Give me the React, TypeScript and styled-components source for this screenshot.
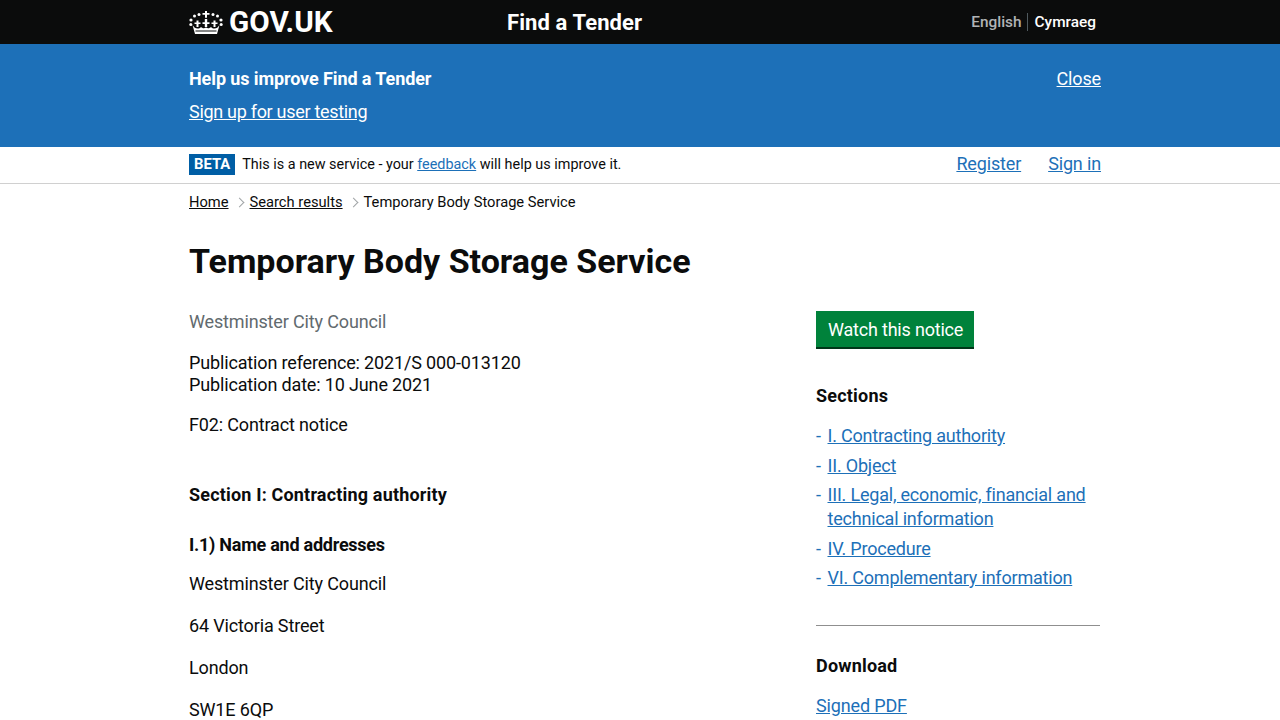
import React from "react";
import styled, { createGlobalStyle } from "styled-components";

const Global = createGlobalStyle`
  html, body { margin: 0; padding: 0; background: #fff; overflow: hidden; height: 720px; }
  body { font-family: Roboto, "Liberation Sans", sans-serif; color: #0b0c0c; }
`;
const Wrap = styled.div`
  width: 912px;
  margin-left: 189px;
`;
const Header = styled.header`
  background: #0b0c0c;
  height: 44px;
  color: #fff;
`;
const HeaderRow = styled(Wrap)`
  display: grid;
  grid-template-columns: 318px 1fr auto;
  align-items: center;
  height: 44px;
`;
const Logo = styled.div`
  display: flex;
  align-items: center;
  gap: 6px;
  font-size: 29.700px;
  font-weight: 700;
`;
const LogoText = styled.span`
  padding-bottom: 2px;
`;
const Service = styled.div`
  font-size: 22px;
  font-weight: 700;
  letter-spacing: 0.1px;
`;
const Lang = styled.div`
  display: flex;
  align-items: center;
  font-size: 15.400px;
  font-weight: 500;
  margin-right: 5px;
`;
const LangItem = styled.span<{ $active?: boolean }>`
  color: ${(p) => (p.$active ? "#fff" : "#b1b4b6")};
  ${(p) => (p.$active ? "" : "border-right: 1px solid #505a5f; padding-right: 5px; margin-right: 7px;")}
`;
const Banner = styled.section`
  background: #1d70b8;
  height: 103px;
  color: #fff;
`;
const BannerRow = styled(Wrap)`
  display: flex;
  justify-content: space-between;
  padding-top: 23px;
`;
const BannerTitle = styled.div`
  font-size: 18px;
  font-weight: 700;
  line-height: 24px;
  letter-spacing: -0.1px;
`;
const BannerLink = styled.a`
  display: block;
  color: #fff;
  text-decoration: underline;
  font-size: 18px;
  line-height: 24px;
  margin-top: 9px;
  letter-spacing: -0.3px;
`;
const CloseLink = styled.a`
  color: #fff;
  text-decoration: underline;
  font-size: 18px;
  line-height: 24px;
  letter-spacing: -0.15px;
`;
const BetaBar = styled.div`
  height: 36px;
  border-bottom: 1px solid #d0d0d0;
`;
const BetaRow = styled(Wrap)`
  display: flex;
  justify-content: space-between;
  align-items: center;
  height: 34px;
`;
const BetaLeft = styled.div`
  display: flex;
  align-items: center;
  gap: 7px;
  font-size: 14.400px;
`;
const Tag = styled.span`
  background: #005ea5;
  color: #fff;
  font-weight: 700;
  font-size: 14.800px;
  line-height: 21px;
  padding: 0 5px;
`;
const InlineLink = styled.a`
  color: #1d70b8;
  text-decoration: underline;
`;
const Account = styled.div`
  display: flex;
  gap: 27px;
  font-size: 18px;
  letter-spacing: -0.15px;
  padding-bottom: 2px;
`;
const Crumbs = styled.nav`
  display: flex;
  align-items: center;
  font-size: 14.700px;
  height: 36px;
`;
const CrumbLink = styled.a`
  color: #0b0c0c;
  text-decoration: underline;
`;
const Chev = styled.span`
  width: 6px;
  height: 6px;
  border-top: 1px solid #a0a4a6;
  border-right: 1px solid #a0a4a6;
  transform: rotate(45deg);
  margin: 0 7px;
`;
const Title = styled.h1`
  font-size: 34px;
  line-height: 44px;
  font-weight: 700;
  margin: 19px 0 0;
`;
const Columns = styled.div`
  display: grid;
  grid-template-columns: 627px 285px;
  margin-top: 27px;
`;
const Org = styled.p`
  color: #626a6e;
  font-size: 18px;
  line-height: 24px;
  margin: 0 0 18px;
  letter-spacing: -0.15px;
`;
const Para = styled.p`
  font-size: 18px;
  line-height: 22px;
  margin: 0 0 18px;
  letter-spacing: -0.15px;
`;
const SectionHead = styled.h2`
  font-size: 18px;
  line-height: 24px;
  font-weight: 700;
  margin: 47px 0 0;
  letter-spacing: 0.18px;
`;
const SubHead = styled.h3`
  font-size: 18px;
  line-height: 24px;
  font-weight: 700;
  margin: 26px 0 15px;
  letter-spacing: -0.25px;
`;
const Address = styled.p`
  font-size: 18px;
  line-height: 24px;
  margin: 0 0 18px;
  letter-spacing: -0.15px;
`;
const Aside = styled.aside`
  padding-top: 1px;
`;
const Button = styled.button`
  display: block;
  background: #00823b;
  color: #fff;
  border: 0;
  box-shadow: 0 2px 0 #003618;
  font: inherit;
  font-size: 18px;
  line-height: 24px;
  padding: 7px 12px 5px;
  height: 36px;
  width: 158px;
  white-space: nowrap;
  letter-spacing: -0.2px;
`;
const SideHead = styled.h2<{ $first?: boolean }>`
  font-size: 18px;
  line-height: 24px;
  font-weight: 700;
  margin: ${(p) => (p.$first ? "37px" : "0")} 0 0;
  letter-spacing: 0.2px;
`;
const SideList = styled.ul`
  list-style: none;
  margin: 16px 0 0;
  padding: 0;
`;
const SideItem = styled.li`
  display: flex;
  font-size: 18px;
  line-height: 24px;
  margin-bottom: 5.500px;
  letter-spacing: -0.2px;
  &::before {
    content: "-";
    color: #1d70b8;
    width: 11.500px;
    flex: none;
  }
`;
const PlainItem = styled.li`
  font-size: 18px;
  line-height: 24px;
  letter-spacing: -0.15px;
`;
const Rule = styled.hr`
  border: 0;
  border-top: 1px solid #8f8f8f;
  margin: 35px 1px 28px 0;
`;

const Crown = () => (
  <svg width="34" height="25" viewBox="0 0 34 25" fill="#fff" aria-hidden="true">
    <path d="M16 1h2v2h2.500v1.800H18v3h-2v-3h-2.500V3H16z" />
    <circle cx="10" cy="4.500" r="1.500" /><circle cx="24" cy="4.500" r="1.500" />
    <circle cx="5.500" cy="6" r="1.500" /><circle cx="28.500" cy="6" r="1.500" />
    <circle cx="2" cy="10" r="1.600" /><circle cx="32" cy="10" r="1.600" />
    <circle cx="1.800" cy="14.500" r="1.500" /><circle cx="32.200" cy="14.500" r="1.500" />
    <path d="M15.800 9h2.400v3.200h2.300v1.800h-2.300v3h-2.400v-3h-2.300v-1.800h2.300z" />
    <path d="M7.500 10.500h2v2h2v1.600h-2v3h-2v-3h-2v-1.600h2zM24.500 10.500h2v2h2v1.600h-2v3h-2v-3h-2v-1.600h2z" />
    <path d="M3.500 15c1.500 2.500 3 3.500 5 3.500 1.500 0 2.500-.5 3.500-1.500 1 1 3 2 5 .5 2 1.500 4 .5 5-.5 1 1 2 1.500 3.500 1.500 2 0 3.500-1 5-3.500l-2.500 9H6z" />
    <path d="M6.500 21h21" stroke="#0b0c0c" strokeWidth="1" />
  </svg>
);

export default function App() {
  return (
    <>
      <Global />
      <Header>
        <HeaderRow>
          <Logo><Crown /><LogoText>GOV.UK</LogoText></Logo>
          <Service>Find a Tender</Service>
          <Lang>
            <LangItem>English</LangItem>
            <LangItem $active>Cymraeg</LangItem>
          </Lang>
        </HeaderRow>
      </Header>
      <Banner>
        <BannerRow>
          <div>
            <BannerTitle>Help us improve Find a Tender</BannerTitle>
            <BannerLink>Sign up for user testing</BannerLink>
          </div>
          <CloseLink>Close</CloseLink>
        </BannerRow>
      </Banner>
      <BetaBar>
        <BetaRow>
          <BetaLeft>
            <Tag>BETA</Tag>
            <span>This is a new service - your <InlineLink>feedback</InlineLink> will help us improve it.</span>
          </BetaLeft>
          <Account>
            <InlineLink>Register</InlineLink>
            <InlineLink>Sign in</InlineLink>
          </Account>
        </BetaRow>
      </BetaBar>
      <Wrap>
        <Crumbs>
          <CrumbLink>Home</CrumbLink><Chev />
          <CrumbLink>Search results</CrumbLink><Chev />
          <span>Temporary Body Storage Service</span>
        </Crumbs>
        <Title>Temporary Body Storage Service</Title>
        <Columns>
          <main>
            <Org>Westminster City Council</Org>
            <Para>Publication reference: 2021/S 000-013120<br />Publication date: 10 June 2021</Para>
            <Para>F02: Contract notice</Para>
            <SectionHead>Section I: Contracting authority</SectionHead>
            <SubHead>I.1) Name and addresses</SubHead>
            <Address>Westminster City Council</Address>
            <Address>64 Victoria Street</Address>
            <Address>London</Address>
            <Address>SW1E 6QP</Address>
          </main>
          <Aside>
            <Button>Watch this notice</Button>
            <SideHead $first>Sections</SideHead>
            <SideList>
              <SideItem><InlineLink>I. Contracting authority</InlineLink></SideItem>
              <SideItem><InlineLink>II. Object</InlineLink></SideItem>
              <SideItem><InlineLink>III. Legal, economic, financial and technical information</InlineLink></SideItem>
              <SideItem><InlineLink>IV. Procedure</InlineLink></SideItem>
              <SideItem><InlineLink>VI. Complementary information</InlineLink></SideItem>
            </SideList>
            <Rule />
            <SideHead>Download</SideHead>
            <SideList>
              <PlainItem><InlineLink>Signed PDF</InlineLink></PlainItem>
            </SideList>
          </Aside>
        </Columns>
      </Wrap>
    </>
  );
}
